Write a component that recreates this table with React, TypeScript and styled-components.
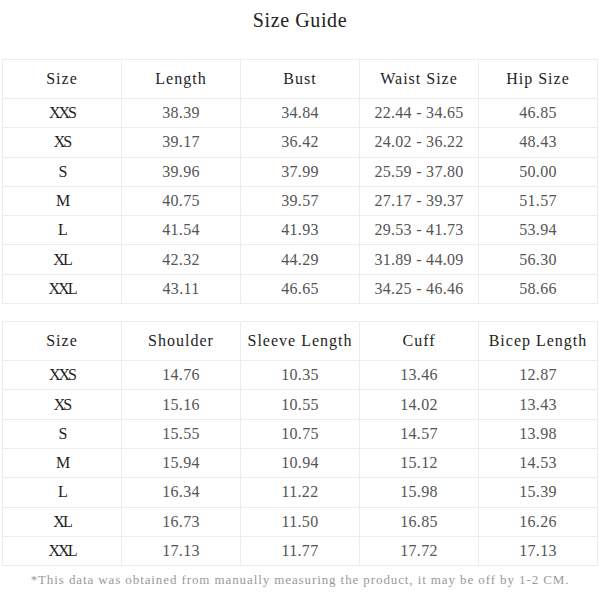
import React from "react";
import styled, { createGlobalStyle } from "styled-components";

const Global = createGlobalStyle`
  html, body { margin: 0; padding: 0; background: #ffffff; }
  body { font-family: "Liberation Serif", "Noto Sans CJK SC", serif; }
`;

const Page = styled.div`
  width: 600px;
  padding: 0 2px;
  box-sizing: border-box;
  display: flex;
  flex-direction: column;
`;

const Title = styled.h1`
  margin: 0 0 19px;
  height: 40px;
  line-height: 40px;
  text-align: center;
  font-size: 20px;
  font-weight: normal;
  letter-spacing: 0.6px;
  color: #222;
`;

const Table = styled.table<{ $gap?: number }>`
  width: 596px;
  table-layout: fixed;
  border-collapse: collapse;
  margin-bottom: ${(p) => p.$gap ?? 0}px;
`;

const HeadCell = styled.th`
  height: 38px;
  padding: 0;
  border: 1px solid #ececec;
  font-weight: normal;
  font-size: 16px;
  letter-spacing: 1px;
  color: #1e1e1e;
  text-align: center;
  white-space: nowrap;
`;

const Cell = styled.td<{ $strong?: boolean }>`
  height: 28.3px;
  padding: 0;
  border: 1px solid #ececec;
  font-size: 16px;
  letter-spacing: ${(p) => (p.$strong ? "-2px" : "0.3px")};
  color: ${(p) => (p.$strong ? "#1e1e1e" : "#555")};
  font-weight: normal;
  text-align: center;
  white-space: nowrap;
`;

const Note = styled.p`
  margin: 6px 0 0;
  text-align: center;
  font-size: 13px;
  letter-spacing: 0.9px;
  color: #9a9a9a;
  white-space: nowrap;
`;

type TableData = { head: string[]; rows: string[][] };

const t1: TableData = {
  head: ["Size", "Length", "Bust", "Waist Size", "Hip Size"],
  rows: [
    ["XXS", "38.39", "34.84", "22.44 - 34.65", "46.85"],
    ["XS", "39.17", "36.42", "24.02 - 36.22", "48.43"],
    ["S", "39.96", "37.99", "25.59 - 37.80", "50.00"],
    ["M", "40.75", "39.57", "27.17 - 39.37", "51.57"],
    ["L", "41.54", "41.93", "29.53 - 41.73", "53.94"],
    ["XL", "42.32", "44.29", "31.89 - 44.09", "56.30"],
    ["XXL", "43.11", "46.65", "34.25 - 46.46", "58.66"],
  ],
};

const t2: TableData = {
  head: ["Size", "Shoulder", "Sleeve Length", "Cuff", "Bicep Length"],
  rows: [
    ["XXS", "14.76", "10.35", "13.46", "12.87"],
    ["XS", "15.16", "10.55", "14.02", "13.43"],
    ["S", "15.55", "10.75", "14.57", "13.98"],
    ["M", "15.94", "10.94", "15.12", "14.53"],
    ["L", "16.34", "11.22", "15.98", "15.39"],
    ["XL", "16.73", "11.50", "16.85", "16.26"],
    ["XXL", "17.13", "11.77", "17.72", "17.13"],
  ],
};

function SizeTable({ data, gap }: { data: TableData; gap?: number }) {
  return (
    <Table $gap={gap}>
      <thead>
        <tr>
          {data.head.map((h) => (
            <HeadCell key={h}>{h}</HeadCell>
          ))}
        </tr>
      </thead>
      <tbody>
        {data.rows.map((r) => (
          <tr key={r[0]}>
            {r.map((c, i) => (
              <Cell key={i} $strong={i === 0}>
                {c}
              </Cell>
            ))}
          </tr>
        ))}
      </tbody>
    </Table>
  );
}

export default function App() {
  return (
    <>
      <Global />
      <Page>
        <Title>Size Guide</Title>
        <SizeTable data={t1} gap={17} />
        <SizeTable data={t2} />
        <Note>
          *This data was obtained from manually measuring the product, it may be off by 1-2 CM.
        </Note>
      </Page>
    </>
  );
}
